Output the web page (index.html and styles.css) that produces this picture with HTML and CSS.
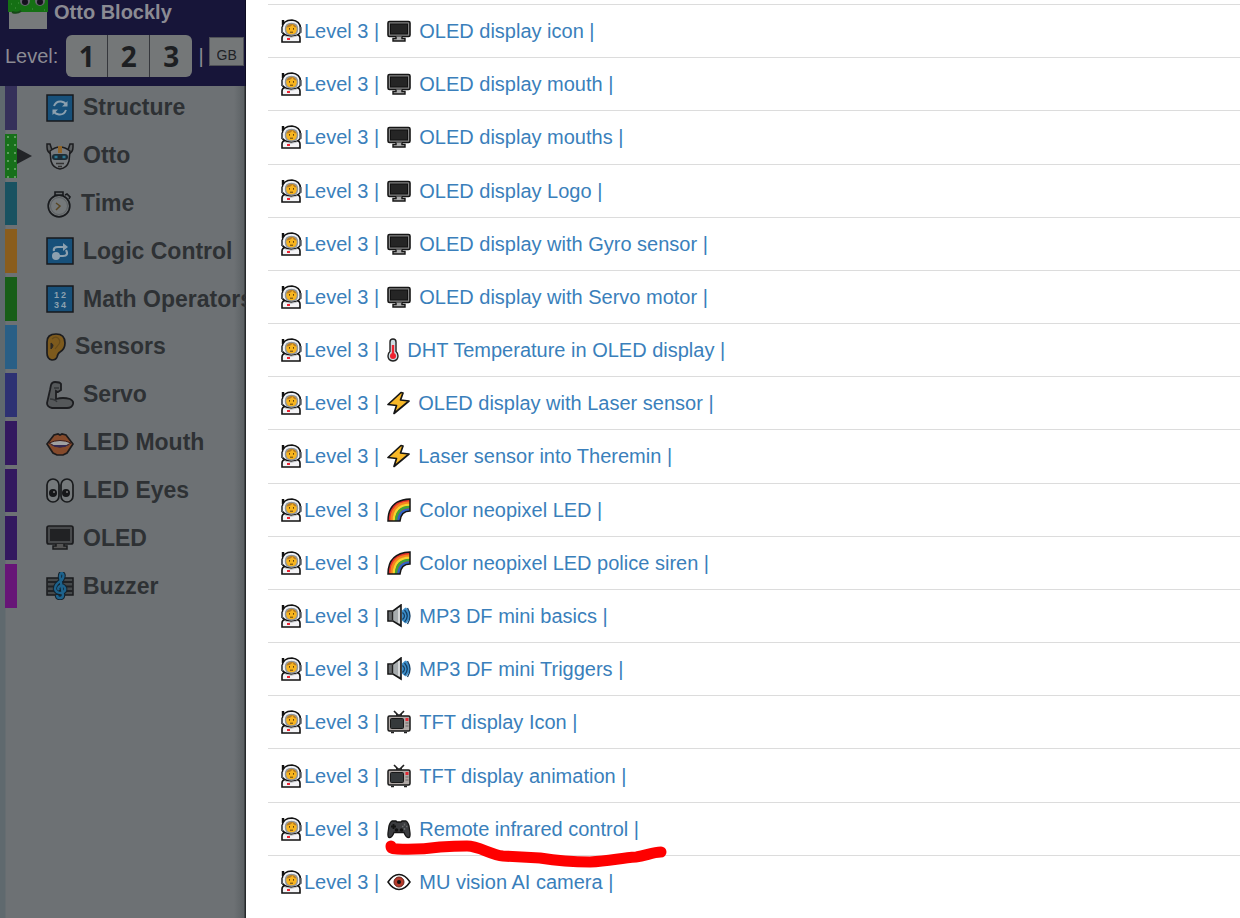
FILE: index.html
```html
<!DOCTYPE html>
<html lang="en">
<head>
<meta charset="utf-8">
<meta name="viewport" content="width=device-width, initial-scale=1">
<title>Otto Blockly</title>
<link rel="stylesheet" href="styles.css">
</head>
<body>
<svg class="sprites" aria-hidden="true">
  <symbol id="astronaut" viewBox="0 0 22 24">
    <path d="M2 23v-4q0-3 4-4h10q4 1 4 4v4z" fill="#f4f4f6" stroke="#111" stroke-width="1.600"/>
    <path d="M3 6V1" stroke="#111" stroke-width="2.400"/>
    <path d="M2 9q1-8 10-8 8 1 8.500 8v4q-2 4-9 4t-9.500-4z" fill="#f0f1f4" stroke="#111" stroke-width="1.600"/>
    <path d="M2 8v6M20.500 8v6" stroke="#55595e" stroke-width="2"/>
    <path d="M5.500 10q0-5.500 6-5.500t6 5.500q0 6-6 6t-6-6z" fill="#f8b51f" stroke="#8f959b" stroke-width="1.400"/>
    <path d="M6.500 8.500q4 0 6-3 1 3 4 3-1-3.500-5-3.500t-5 3.500" fill="#bb7d21"/>
    <path d="M9.500 9v1.700M13.500 9v1.700M10 13.200h3" stroke="#62400e" fill="none"/>
    <path d="M5 17q6 3 12 0" stroke="#c5c8cc" fill="none"/>
    <path d="M7 19h3v2H7z" fill="#ee2433"/>
  </symbol>
  <symbol id="screen" viewBox="0 0 24 24">
    <rect x="1" y="2.500" width="22" height="15" rx="1.500" fill="#858585" stroke="#161616" stroke-width="1.600"/>
    <rect x="3.500" y="5" width="17" height="10" fill="#252525" stroke="#111"/>
    <path d="M9 17.500v2H6V22h12v-2.500h-3v-2" fill="#aaa" stroke="#161616" stroke-width="1.400"/>
  </symbol>
  <symbol id="thermo" viewBox="0 0 12 24">
    <path d="M3 13.500V4q0-3 3-3t3 3v9.500q2 1.500 2 4.500 0 4.500-5 5-5-.5-5-5 0-3 2-4.500z" fill="#cfdde2" stroke="#222" stroke-width="1.400"/>
    <path d="M6 7v11" stroke="#ef2330" stroke-width="2.400"/><circle cx="6" cy="18" r="3" fill="#ef2330"/>
  </symbol>
  <symbol id="bolt" viewBox="0 0 23 24">
    <path d="M14 1.500 1 13.500l8.500 1L7 22.500 22 10l-8.500-1L16 2z" fill="#f9b928" stroke="#151515" stroke-width="1.700" stroke-linejoin="round"/>
  </symbol>
  <symbol id="rainbow" viewBox="0 0 24 24">
    <path d="M1 23Q1 2 23 1v12q-9 0-10 10z" fill="#e8342c"/>
    <g fill="none" stroke-width="2.500"><path d="M4.500 23Q4.500 5 23 4.500" stroke="#f58420"/><path d="M6.800 23Q7 7 23 6.800" stroke="#f7d42c"/><path d="M9 23Q9.500 9 23 9" stroke="#3fa535"/><path d="M11.500 23Q12 12 23 11.500" stroke="#2d62c7"/></g>
    <path d="M1 23Q1 2 23 1v12q-9 0-10 10z" fill="none" stroke="#151515" stroke-width="1.500"/>
  </symbol>
  <symbol id="speaker" viewBox="0 0 24 24">
    <path d="M1 7h5l8-6v21l-8-5H1z" fill="#a6abad" stroke="#151515" stroke-width="1.600"/>
    <path d="M2 8h3v8H2z" fill="#6a6d6f"/><path d="M5.500 8v8" stroke="#222" stroke-width="1.400"/><path d="M12 4v15" stroke="#d5d7d8" stroke-width="2"/>
    <path d="M15 6.500q3-3 4-3 8 8 0 16-2-1-4-3z" fill="#3d8fcb"/>
    <path d="M15.500 8.500q4 3.500 0 7M17.500 6q5.500 6 0 12M20.500 4q5 8 0 16" fill="none" stroke="#153f63" stroke-width="1.300"/>
  </symbol>
  <symbol id="tv" viewBox="0 0 24 24">
    <path d="m7 1 4 4h2l4-4M9 5h6" fill="none" stroke="#222" stroke-width="1.700"/>
    <rect x="1" y="6" width="22" height="15" rx="1.500" fill="#b0a9a6" stroke="#181818" stroke-width="1.500"/>
    <rect x="3.500" y="8.500" width="13" height="10" rx="1" fill="#35393b" stroke="#181818"/>
    <path d="M18.500 8h3v3h-3z" fill="#e42834"/><path d="M18.500 13h3M18.500 16h3" stroke="#6c6766"/><path d="M4 22.500h3M17 22.500h3" stroke="#222" stroke-width="1.500"/>
  </symbol>
  <symbol id="gamepad" viewBox="0 0 24 24">
    <path d="M5 4h4l1 1h4l1-1h4q2 1 3 5l1 7q.500 5-2 4.500-2 0-4-5H7q-2 5-4 5-2.500.500-2-4.500l1-7q1-4 3-5z" fill="#3b3c3f" stroke="#151515" stroke-width="1.300"/>
    <path d="M6.500 7v5M4 9.500h5" stroke="#111" stroke-width="1.800"/><circle cx="9.500" cy="13" r="1.800" fill="#111"/><circle cx="14.500" cy="13" r="1.800" fill="#111"/>
    <path d="M17.500 6.500v2M17.500 11v2M15 9.500h1.500M19 9.500h1.500" stroke="#66686a" stroke-width="1.500"/>
  </symbol>
  <symbol id="eye" viewBox="0 0 24 24">
    <path d="M1 12q5-7.500 11-7.500t11 7.500q-5 7.500-11 7.500t-11-7.500z" fill="#fff" stroke="#151515" stroke-width="1.500"/>
    <circle cx="12" cy="12" r="5" fill="#b53a2a" stroke="#6b241c"/><circle cx="12" cy="12" r="2" fill="#111"/>
  </symbol>
  <symbol id="loop" viewBox="0 0 28 28">
    <rect x="1" y="1" width="26" height="26" fill="#17507a" stroke="#17191c" stroke-width="1.500"/>
    <path d="M8 12q2-5 7-4.500 4 .5 5.500 3.500M20 16q-2 5-7 4.500-4-.5-5.500-3.500" fill="none" stroke="#8ca0af" stroke-width="2"/>
    <path d="M21.500 7v5.500H16zM6.500 21v-5.500H12z" fill="#8ca0af"/>
  </symbol>
  <symbol id="robot" viewBox="0 0 28 28">
    <path d="M5 12Q1 10 1 5V2h3l2 6M23 12q4-2 4-7V2h-3l-2 6" fill="#5d6062" stroke="#1c1d1f" stroke-width="1.500"/>
    <path d="M4 9q10-8 20 0l-1 10q-2 7-9 8-7-1-9-8z" fill="#777b7e" stroke="#1c1d1f" stroke-width="1.500"/>
    <path d="M12 4h4v7h-4z" fill="#8f6428"/><rect x="6" y="12" width="16" height="6" rx="3" fill="#1b2c35"/>
    <path d="M8.500 15h3M16.500 15h3" stroke="#2b7590" stroke-width="2.500"/><path d="M10 21.500h8M12 24.500h4" stroke="#333" stroke-width="1.500"/>
  </symbol>
  <symbol id="stopwatch" viewBox="0 0 26 28">
    <circle cx="13" cy="16" r="10.800" fill="#74787a" stroke="#191b1e" stroke-width="1.700"/>
    <circle cx="13" cy="16" r="8.500" fill="none" stroke="#5d6164"/><path d="M9 5V2h8v3zM19 5l2-1 3 3-1 2" fill="#666a6c" stroke="#191b1e" stroke-width="1.600"/>
    <path d="m10 13 4 3-4 4" fill="none" stroke="#594622" stroke-width="1.500"/>
  </symbol>
  <symbol id="logic" viewBox="0 0 28 28">
    <rect x="1" y="1" width="26" height="26" fill="#17507a" stroke="#17191c" stroke-width="1.500"/>
    <path d="M8 14q-1-4 4-4h7M20 13q3 6-3 6h-5" fill="none" stroke="#8ca0af" stroke-width="2.200"/><path d="m17 6 5 4-5 4z" fill="#8ca0af"/><circle cx="10" cy="19" r="4" fill="#8ca0af"/>
  </symbol>
  <symbol id="ear" viewBox="0 0 20 28">
    <path d="M1 9Q1 1 10 1t9 9q0 6-5 9-2 1-3 5-1 3-5 3-5-1-5-7z" fill="#7d5a1d" stroke="#1c1c1e" stroke-width="1.700"/>
    <path d="M6 6q3-3 6-1 3 3 1 6l-4 5" fill="none" stroke="#674b1a" stroke-width="1.200"/><path d="M5 10q4 2 0 6z" fill="#2c2925" stroke="#2c2925"/>
  </symbol>
  <symbol id="arm" viewBox="0 0 28 28">
    <path d="M5 4q1-3 4-3 5 0 6 2v6l-3 2-2-1v8q7-2 14 0 4 2 3 5-1 4-6 4H6q-5-1-5-5L4 9z" fill="#55585a" stroke="#1c1d20" stroke-width="1.800"/><path d="M8 7h5M4 18q5 0 7 3" fill="none" stroke="#333639" stroke-width="1.300"/>
  </symbol>
  <symbol id="mouth" viewBox="0 0 28 28">
    <path d="M1 15 8 6l4-1 2 1 2-1 4 1 7 9-6 9-4 2H11l-4-2z" fill="#854a2b" stroke="#1d1b1c" stroke-width="1.700"/>
    <path d="M3 14q11-5 22 0-11 8-22 0z" fill="#a0a0a1" stroke="#3c1d1b"/><path d="M5 16h18q-9 5-18 0z" fill="#342850"/>
  </symbol>
  <symbol id="eyes" viewBox="0 0 28 28">
    <rect x="1" y="3" width="12" height="23" rx="6" fill="#75797b" stroke="#191b1d" stroke-width="1.700"/><rect x="15" y="3" width="12" height="23" rx="6" fill="#75797b" stroke="#191b1d" stroke-width="1.700"/>
    <circle cx="7" cy="17" r="4" fill="#161719"/><circle cx="20" cy="17" r="4" fill="#161719"/><circle cx="8" cy="16" r="1" fill="#777"/><circle cx="21" cy="16" r="1" fill="#777"/>
  </symbol>
  <symbol id="oled" viewBox="0 0 28 28">
    <rect x="1" y="2" width="26" height="18" rx="2" fill="#484a4c" stroke="#1b1c1e" stroke-width="1.700"/><rect x="4" y="5" width="20" height="12" fill="#212224"/><path d="M10 20v2H7v3h14v-3h-3v-2" fill="#555" stroke="#1b1c1e" stroke-width="1.500"/>
  </symbol>
  <symbol id="music" viewBox="0 0 28 28">
    <rect x="1" y="6" width="26" height="17" fill="#45494b" stroke="#191a1c" stroke-width="1.500"/><path d="M1 10h26M1 14.500h26M1 19h26" stroke="#202225" stroke-width="2"/>
    <g fill="none"><path id="clef" d="M11 23q0 3 3 3t3-3L14 5q0-4 2-4 3 2 0 7-7 4-7 9 1 4 6 4 5-1 4-5-2-4-5-2-3 2-1 4" stroke="#14232e" stroke-width="4.500"/><path d="M11 23q0 3 3 3t3-3L14 5q0-4 2-4 3 2 0 7-7 4-7 9 1 4 6 4 5-1 4-5-2-4-5-2-3 2-1 4" stroke="#1d628c" stroke-width="2.400"/></g>
  </symbol>
</svg>

<div class="app">
  <aside class="side">
    <header class="top">
      <div class="brand">
        <svg class="logo" viewBox="0 0 40 30" aria-hidden="true"><path d="M0 0h40v12H0z" fill="#157014"/><path d="M1 12h38v17H1z" fill="#777a7b"/><path d="M4 12q5 2 9-1" fill="none" stroke="#174818" stroke-width="2"/><circle cx="17" cy="1" r="5" fill="#66656f"/><circle cx="32" cy="1" r="5" fill="#66656f"/><circle cx="17" cy="2" r="3" fill="#15101e"/><circle cx="32" cy="2" r="3" fill="#15101e"/><path d="M3 4h1M7 8h1M10 3h1M24 9h1M36 10h1" stroke="#499745"/></svg>
        <span>Otto Blockly</span>
      </div>
      <div class="tools">
        <span>Level:</span>
        <div class="levels"><button>1</button><button>2</button><button>3</button></div>
        <span>|</span>
        <select class="lang" aria-label="Language"><option>GB</option></select>
      </div>
    </header>
    <nav class="toolbox">
      <button class="cat structure"><svg><use href="#loop"/></svg>Structure</button>
      <button class="cat otto"><svg><use href="#robot"/></svg>Otto</button>
      <button class="cat time"><svg class="w26"><use href="#stopwatch"/></svg>Time</button>
      <button class="cat logic"><svg><use href="#logic"/></svg>Logic Control</button>
      <button class="cat math"><svg viewBox="0 0 28 28" aria-hidden="true"><rect x="1" y="1" width="26" height="26" fill="#17507a" stroke="#17191c" stroke-width="1.500"/><text class="digits" x="8" y="13">1</text><text class="digits" x="15" y="13">2</text><text class="digits" x="8" y="23">3</text><text class="digits" x="15" y="23">4</text></svg>Math Operators</button>
      <button class="cat sensors"><svg class="w20"><use href="#ear"/></svg>Sensors</button>
      <button class="cat servo"><svg><use href="#arm"/></svg>Servo</button>
      <button class="cat led"><svg><use href="#mouth"/></svg>LED Mouth</button>
      <button class="cat led"><svg><use href="#eyes"/></svg>LED Eyes</button>
      <button class="cat led"><svg><use href="#oled"/></svg>OLED</button>
      <button class="cat buzzer"><svg><use href="#music"/></svg>Buzzer</button>
    </nav>
  </aside>
  <main class="panel">
    <ul class="examples">
      <li><a href="#"><svg class="who"><use href="#astronaut"/></svg><span>Level 3 |</span><svg><use href="#screen"/></svg><span>OLED display icon |</span></a></li>
      <li><a href="#"><svg class="who"><use href="#astronaut"/></svg><span>Level 3 |</span><svg><use href="#screen"/></svg><span>OLED display mouth |</span></a></li>
      <li><a href="#"><svg class="who"><use href="#astronaut"/></svg><span>Level 3 |</span><svg><use href="#screen"/></svg><span>OLED display mouths |</span></a></li>
      <li><a href="#"><svg class="who"><use href="#astronaut"/></svg><span>Level 3 |</span><svg><use href="#screen"/></svg><span>OLED display Logo |</span></a></li>
      <li><a href="#"><svg class="who"><use href="#astronaut"/></svg><span>Level 3 |</span><svg><use href="#screen"/></svg><span>OLED display with Gyro sensor |</span></a></li>
      <li><a href="#"><svg class="who"><use href="#astronaut"/></svg><span>Level 3 |</span><svg><use href="#screen"/></svg><span>OLED display with Servo motor |</span></a></li>
      <li><a href="#"><svg class="who"><use href="#astronaut"/></svg><span>Level 3 |</span><svg class="w12"><use href="#thermo"/></svg><span>DHT Temperature in OLED display |</span></a></li>
      <li><a href="#"><svg class="who"><use href="#astronaut"/></svg><span>Level 3 |</span><svg class="w23"><use href="#bolt"/></svg><span>OLED display with Laser sensor |</span></a></li>
      <li><a href="#"><svg class="who"><use href="#astronaut"/></svg><span>Level 3 |</span><svg class="w23"><use href="#bolt"/></svg><span>Laser sensor into Theremin |</span></a></li>
      <li><a href="#"><svg class="who"><use href="#astronaut"/></svg><span>Level 3 |</span><svg><use href="#rainbow"/></svg><span>Color neopixel LED |</span></a></li>
      <li><a href="#"><svg class="who"><use href="#astronaut"/></svg><span>Level 3 |</span><svg><use href="#rainbow"/></svg><span>Color neopixel LED police siren |</span></a></li>
      <li><a href="#"><svg class="who"><use href="#astronaut"/></svg><span>Level 3 |</span><svg><use href="#speaker"/></svg><span>MP3 DF mini basics |</span></a></li>
      <li><a href="#"><svg class="who"><use href="#astronaut"/></svg><span>Level 3 |</span><svg><use href="#speaker"/></svg><span>MP3 DF mini Triggers |</span></a></li>
      <li><a href="#"><svg class="who"><use href="#astronaut"/></svg><span>Level 3 |</span><svg><use href="#tv"/></svg><span>TFT display Icon |</span></a></li>
      <li><a href="#"><svg class="who"><use href="#astronaut"/></svg><span>Level 3 |</span><svg><use href="#tv"/></svg><span>TFT display animation |</span></a></li>
      <li><a href="#"><svg class="who"><use href="#astronaut"/></svg><span>Level 3 |</span><svg><use href="#gamepad"/></svg><span>Remote infrared control |</span></a>
        <svg class="stroke" viewBox="0 0 280 30" aria-hidden="true"><path d="M5 5q0 3 6 3 22 1 43-2 15-1 27-1c12 0 24 9 36 10l37 2q25 4 50 4c20-1 30-4 46-5 10-1 16-5 25-5" fill="none" stroke="#fe0000" stroke-width="11" stroke-linecap="round" stroke-linejoin="round"/></svg></li>
      <li><a href="#"><svg class="who"><use href="#astronaut"/></svg><span>Level 3 |</span><svg><use href="#eye"/></svg><span>MU vision AI camera |</span></a></li>
    </ul>
  </main>
</div>
</body>
</html>
```

FILE: styles.css
```css
* { box-sizing: border-box; }
body { margin: 0; font-family: "Liberation Sans", Arial, sans-serif; background: #fff; }
.sprites { position: absolute; width: 0; height: 0; }
.digits { font: bold 9px "Liberation Sans", Arial, sans-serif; fill: #8ca0af; }
.app { display: flex; min-height: 100vh; }

.side {
  flex: 0 0 246px;
  overflow: hidden;
  background: linear-gradient(to left, #26292b 1px, #5c6164 2px, #6d7174 12px, transparent 13px), linear-gradient(to right, #5f696e 5px, #6d7174 6px);
}
.top { height: 86px; overflow: hidden; background: #171539; border-right: 1px solid #0d0c22; color: #8b8b93; }
.brand { display: flex; gap: 6px; height: 30px; padding-left: 8px; font-size: 20px; line-height: 25px; font-weight: bold; white-space: nowrap; }
.logo { flex: none; width: 40px; height: 30px; }
.tools { display: flex; align-items: center; height: 52px; padding-left: 5px; font-size: 20px; white-space: nowrap; }
.levels { display: flex; flex: none; margin: 0 6px 0 8px; border-radius: 6px; overflow: hidden; background: #747778; }
.levels button { width: 42px; height: 42px; padding: 0; border: 0; border-right: 1px solid #35373c; background: none; color: #1d1f22; font: bold 28px "Open Sans", sans-serif; line-height: 42px; }
.levels button:last-child { border-right: 0; }
.lang { flex: none; width: 35px; height: 29px; margin: -10px 0 0 5px; padding: 8px 0 0 7px; appearance: none; border: 1px solid #4f5157; border-radius: 0; background: #747778; color: #202226; font: 14px "Liberation Sans", Arial, sans-serif; }

.toolbox { display: grid; grid-auto-rows: 1fr; gap: 4px; height: 522px; padding-left: 5px; }
.cat { display: flex; align-items: center; gap: 9px; position: relative; padding: 0 0 0 29px; border: 0; border-left: 12px solid; background: none; color: #2e3134; text-align: left; font: bold 23px "Liberation Sans", Arial, sans-serif; white-space: nowrap; }
.cat svg { flex: none; width: 28px; height: 28px; }
.cat .w26 { width: 26px; }
.cat .w20 { width: 20px; }
.structure { border-left-color: #35305a; }
.otto { border-left-color: #17701a; }
.otto::before { content: ""; position: absolute; left: 0; top: 50%; margin-top: -8px; border: 8px solid transparent; border-left: 15px solid #222427; border-right: 0; }
.otto::after { content: ""; position: absolute; left: -12px; top: 0; bottom: 0; width: 12px; background: radial-gradient(circle at 3px 3px, #5d9c5d 1px, transparent 1px) 0 0 / 7px 8px; }
.time { border-left-color: #195261; }
.logic { border-left-color: #8a5d1c; }
.math { border-left-color: #175e18; }
.sensors { border-left-color: #295f86; }
.servo { border-left-color: #2d3173; }
.led { border-left-color: #33185f; }
.buzzer { border-left-color: #671577; }

.panel { flex: 1; min-width: 0; min-height: 100vh; display: flex; padding: 4px 0 10px 22px; background: #fff; }
.examples { flex: 1; display: grid; grid-auto-rows: 1fr; margin: 0; padding: 0; list-style: none; }
.examples li { position: relative; display: flex; align-items: center; padding-left: 12px; border-top: 1px solid #dcdcdc; }
.examples a { display: flex; align-items: center; gap: 8px; color: #3a7fbb; font-size: 20px; line-height: 24px; text-decoration: none; white-space: nowrap; }
.examples a svg { flex: none; width: 24px; height: 24px; }
.examples a .who { width: 22px; margin-right: -6px; }
.examples a .w12 { width: 12px; }
.examples a .w23 { width: 23px; }
.stroke { position: absolute; left: 118px; top: 38px; z-index: 1; width: 280px; height: 30px; overflow: visible; }
```
